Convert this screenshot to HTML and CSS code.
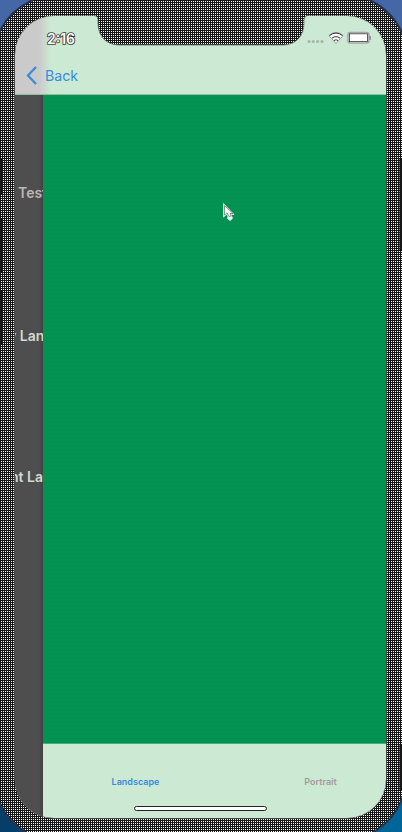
FILE: index.html
```html
<!DOCTYPE html>
<html lang="en">
<head>
<meta charset="utf-8">
<title>Landscape</title>
<link rel="stylesheet" href="styles.css">
</head>
<body>
<div class="desktop">
  <svg class="bezel" width="402" height="832" viewBox="0 0 402 832">
    <defs>
      <pattern id="mesh" width="2" height="2" patternUnits="userSpaceOnUse"><rect width="2" height="2" fill="#161616"/><rect x="1" y="1" width="1" height="1" fill="#fff"/></pattern>
    </defs>
    <path d="M-2 36Q7 11 37-2H365Q394 10 404 38V793Q396 820 370 834H29Q7 822-2 799Z" fill="url(#mesh)" stroke="#25324a" stroke-width="2"/>
    <path d="M401 159V250M401 745V790M1.5 159V194M1.5 218V272M1.5 290V345" stroke="#171717" stroke-width="3"/>
  </svg>
  <main class="screen">
    <header class="top">
      <div class="status">
        <time>2:16</time>
        <svg class="indicators" width="64" height="14" viewBox="0 0 64 14">
          <g fill="#a7b5ab"><circle cx="2" cy="10.5" r="1.6"/><circle cx="6.3" cy="10.5" r="1.6"/><circle cx="10.6" cy="10.5" r="1.6"/><circle cx="15" cy="10.5" r="1.6"/></g>
          <path d="M22 4.5Q29-1.5 36 4.5L29 12.5Z" fill="#fff" stroke="#888" stroke-width=".8"/>
          <path d="M22.5 4.5Q29 -.5 35.5 4.5M25 7.2Q29 4 33 7.2M27 9.5Q29 8 31 9.5" fill="none" stroke="#333" stroke-width="1"/>
          <rect x="41" y="1.5" width="21" height="10.5" rx="2.5" fill="#fff" stroke="#a5a5a5" stroke-width="1.6"/>
          <rect x="42.5" y="2.8" width="18" height="7.8" fill="#fff" stroke="#333" stroke-width=".8"/>
          <path d="M63 5v4" stroke="#999" stroke-width="2"/>
        </svg>
      </div>
      <nav class="back">
        <svg width="12" height="20" viewBox="0 0 12 20"><path d="M10 1L2 9.5l8 8.5" fill="none" stroke="#398bdc" stroke-width="2.3"/></svg>
        <span>Back</span>
      </nav>
    </header>
    <section class="content">
      <aside class="previous"><span class="test">Test</span><span class="new">y Land</span><span class="current">nt Land</span></aside>
      <div class="page">
        <div class="canvas"></div>
        <nav class="tabs"><span class="selected">Landscape</span><span>Portrait</span></nav>
      </div>
    </section>
  </main>
  <svg class="notch" width="214" height="31" viewBox="0 0 214 31">
    <defs><pattern id="mesh-notch" x="1" width="2" height="2" patternUnits="userSpaceOnUse"><rect width="2" height="2" fill="#161616"/><rect width="1" height="1" fill="#fff"/></pattern></defs>
    <path d="M0 0H214V.5C210 1 210 4 210 8C210 21 202 30 189 30H25C12 30 4 21 4 8C4 4 4 1 0 .5Z" fill="url(#mesh-notch)"/>
    <path d="M214 .5C210 1 210 4 210 8C210 21 202 30 189 30H25C12 30 4 21 4 8C4 4 4 1 0 .5" fill="none" stroke="#69776d" stroke-width=".8"/>
  </svg>
  <div class="home"></div>
  <svg class="cursor" width="14" height="20" viewBox="0 0 14 20"><path d="M1.5 1.5V15L4.5 12.5L6 14L5.5 16.5L8 18.5L10.5 16.5L9 12.5H12Z" fill="#fff" stroke="#d5dfd8" stroke-width="1"/><path d="M2.5 3.5V13L5 11L7 14.5L9 14L8 11.5H11Z" fill="#fff" stroke="#59675f" stroke-width=".7"/></svg>
</div>
</body>
</html>
```
FILE: styles.css
```css
* { box-sizing: border-box; }
body { margin: 0; font-family: Inter, "Liberation Sans", sans-serif; }
.desktop { position: relative; width: 402px; height: 832px; padding: 16px 16px 14px 15px; overflow: hidden; background: linear-gradient(90deg, #063d69, #006699) 0 100% / 100% 50% no-repeat, #4567a6; }
.bezel { position: absolute; left: 0; top: 0; }
.screen { position: relative; width: 371px; height: 802px; overflow: hidden; border-radius: 39px; background: #4d4d4d; box-shadow: 0 0 0 .5px #777; }
.top { height: 79px; background: linear-gradient(90deg, #cacaca 0 24px, #cbe9d3 36px); border-bottom: 1px solid #91bda0; }
.status { display: flex; justify-content: space-between; padding: 15px 15px 0 32px; height: 44px; }
.status time { font-size: 14px; line-height: 15px; font-weight: 600; color: #fff; -webkit-text-stroke: 1.7px #3c3c3c; paint-order: stroke fill; }
.back { display: flex; align-items: center; gap: 7px; padding-left: 11px; height: 31px; color: #398bdc; font-size: 14.2px; }
.content { display: flex; height: 723px; }
.previous { width: 28px; overflow: hidden; background: linear-gradient(90deg, #4d4e4d 85%, #414141); color: #d1d9cf; font-size: 14px; font-weight: 600; line-height: 18px; white-space: nowrap; }
.previous span { display: block; height: 142px; }
.previous .test { height: 232px; padding: 89px 0 0 3px; color: #bcb7b0; }
.previous .new { margin: 0 0 0 -7px; }
.previous .current { margin: -1px 0 0 -5px; }
.page { width: 343px; }
.canvas { height: 649px; background: conic-gradient(from 90deg at 3px 3px, #058a4d 25%, transparent 0) 0 0 / 4px 4px, #029252; border-bottom: 1px solid #45ae76; }
.tabs { display: flex; height: 74px; padding-top: 31px; background: #cbe9d3; color: #a8999d; font-size: 9px; font-weight: 600; line-height: 14px; text-align: center; }
.tabs span { width: 185px; flex: none; }
.tabs .selected { color: #398bdc; }
.notch { position: absolute; left: 94px; top: 15px; }
.home { position: absolute; left: 134px; top: 806px; width: 133px; height: 5px; border: 1px solid #202520; border-radius: 3px; background: #fff; }
.cursor { position: absolute; left: 222px; top: 202px; }
```
